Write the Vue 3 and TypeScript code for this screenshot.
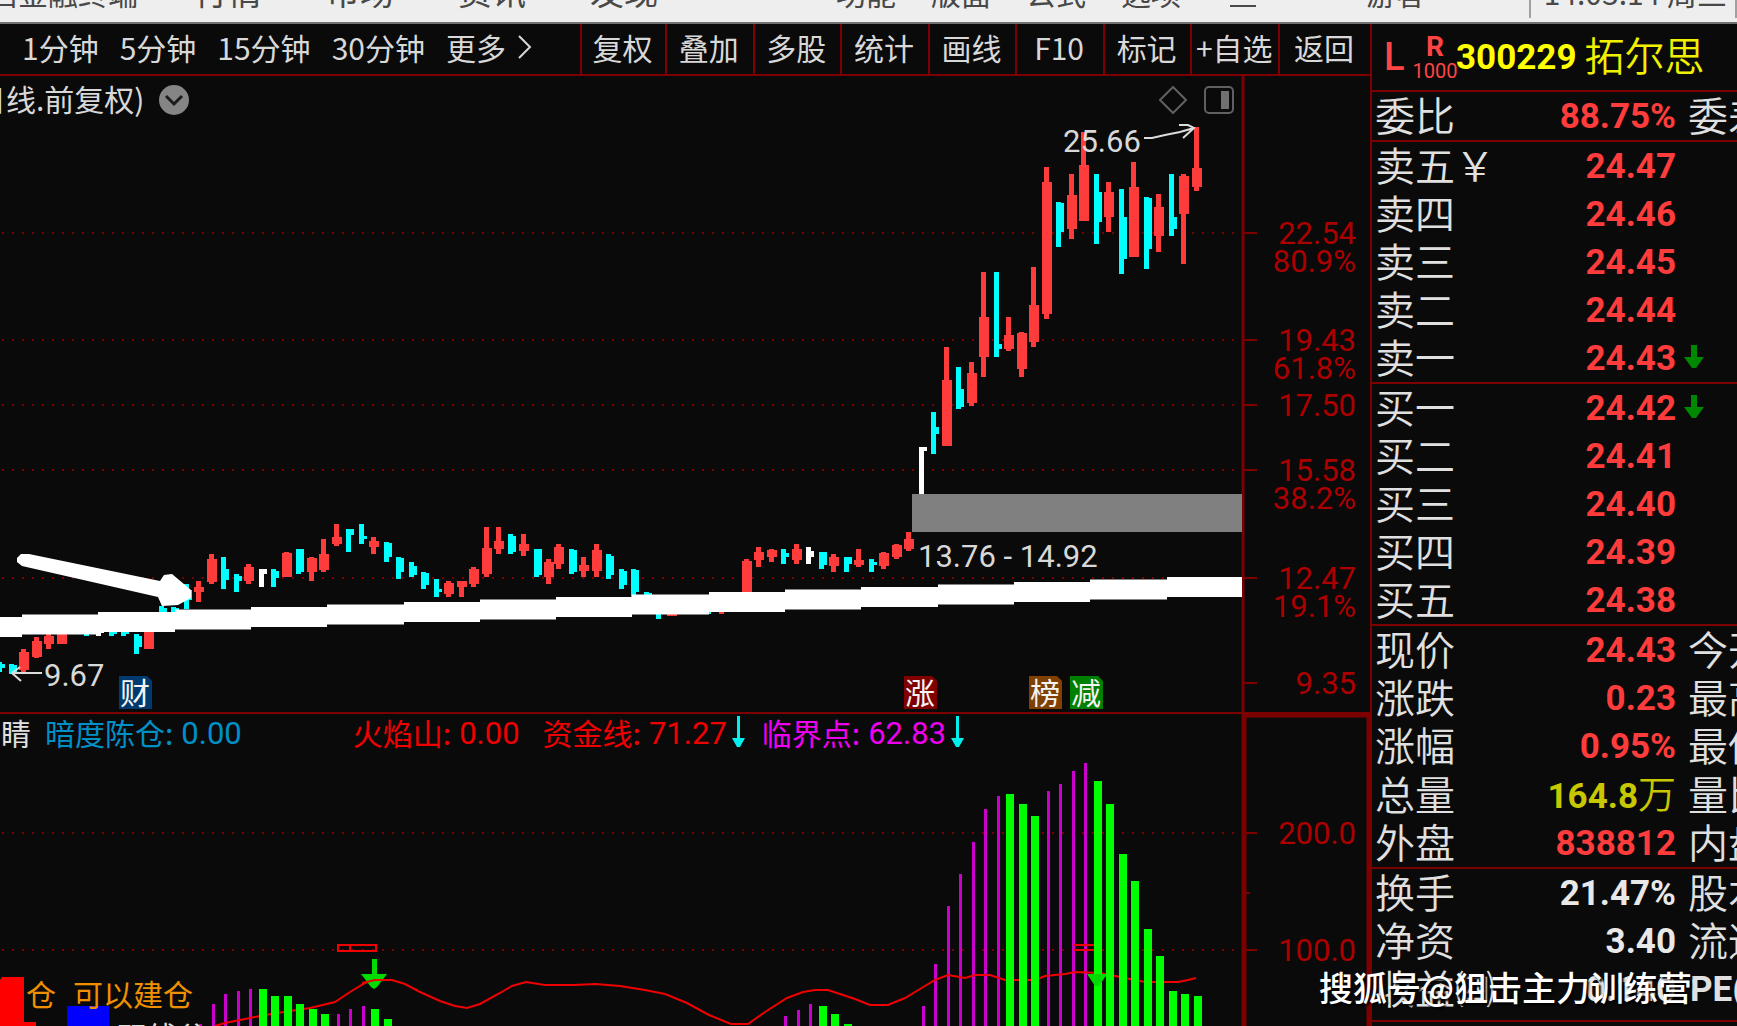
<script setup lang="ts">
type Kind = 'up' | 'down' | 'flat'
type Candle = [x: number, kind: Kind, high: number, low: number, top: number, bottom: number]
type Tone = 'red' | 'yellow' | 'white'

interface QuoteRow {
  label: string
  value: string
  unit?: string
  tone: Tone
  next?: string
  falling?: boolean
}

const leftMenus = ['行情', '市场', '资讯', '发现']
const rightMenus = ['功能', '版面', '公式', '选项']
const periods = ['1分钟', '5分钟', '15分钟', '30分钟']
const tools = ['复权', '叠加', '多股', '统计', '画线', 'F10', '标记', '+自选', '返回']

const candles: Candle[] = [
  [0, 'down', 662, 672, 664, 668], [12, 'down', 664, 674, 665, 673],
  [24, 'up', 649, 672, 652, 670], [37, 'up', 637, 658, 641, 657],
  [49, 'up', 630, 649, 636, 644], [62, 'up', 630, 644, 630, 644],
  [87, 'down', 626, 636, 626, 634], [99, 'flat', 626, 636, 626, 633],
  [112, 'down', 626, 636, 626, 634], [124, 'down', 626, 636, 626, 634],
  [137, 'down', 634, 654, 636, 647], [149, 'up', 625, 649, 625, 649],
  [162, 'down', 606, 614, 608, 612], [174, 'down', 607, 614, 608, 612],
  [187, 'down', 584, 609, 590, 600], [199, 'up', 581, 602, 587, 592],
  [212, 'up', 554, 584, 559, 582], [224, 'down', 557, 589, 569, 580],
  [237, 'down', 574, 592, 576, 581], [249, 'up', 564, 584, 567, 581],
  [262, 'flat', 569, 587, 569, 574], [274, 'down', 569, 587, 571, 578],
  [287, 'up', 552, 577, 553, 577], [299, 'down', 549, 574, 549, 572],
  [312, 'up', 557, 581, 558, 572], [324, 'up', 539, 572, 554, 570],
  [337, 'up', 524, 546, 537, 544], [349, 'down', 529, 552, 529, 535],
  [362, 'down', 524, 544, 536, 539], [374, 'up', 537, 554, 541, 547],
  [387, 'down', 542, 562, 543, 557], [399, 'down', 557, 579, 558, 572],
  [412, 'down', 562, 577, 566, 575], [424, 'down', 572, 589, 573, 585],
  [437, 'down', 579, 597, 589, 592], [449, 'up', 581, 597, 583, 594],
  [462, 'up', 581, 597, 581, 587], [474, 'up', 567, 587, 569, 584],
  [487, 'up', 527, 577, 548, 574], [499, 'up', 527, 554, 541, 549],
  [511, 'down', 534, 554, 536, 552], [524, 'up', 534, 556, 544, 551],
  [537, 'down', 549, 577, 549, 575], [549, 'up', 559, 584, 562, 577],
  [559, 'up', 544, 569, 547, 564], [572, 'down', 549, 574, 550, 572],
  [584, 'up', 557, 577, 565, 571], [597, 'up', 544, 577, 550, 571],
  [609, 'down', 554, 579, 556, 575], [622, 'down', 569, 589, 571, 585],
  [634, 'down', 569, 597, 570, 592], [647, 'down', 592, 602, 593, 600],
  [659, 'down', 604, 619, 606, 612], [672, 'up', 606, 616, 606, 616],
  [709, 'down', 606, 614, 606, 610], [722, 'up', 604, 614, 604, 610],
  [747, 'up', 559, 600, 561, 600], [759, 'up', 547, 567, 552, 560],
  [772, 'up', 549, 562, 550, 557], [784, 'down', 549, 564, 553, 557],
  [797, 'up', 544, 564, 549, 560], [809, 'flat', 547, 564, 551, 557],
  [822, 'down', 552, 569, 552, 565], [834, 'up', 554, 572, 557, 566],
  [847, 'down', 557, 572, 557, 564], [859, 'up', 549, 567, 560, 565],
  [872, 'down', 559, 572, 562, 565], [884, 'up', 552, 569, 553, 566],
  [897, 'up', 544, 559, 545, 557], [909, 'up', 532, 551, 539, 549],
  [922, 'flat', 447, 494, 447, 451], [934, 'down', 412, 454, 427, 434],
  [947, 'up', 347, 446, 380, 446], [959, 'down', 367, 409, 389, 407],
  [972, 'up', 362, 406, 373, 403], [984, 'up', 272, 377, 317, 357],
  [997, 'down', 272, 357, 344, 349], [1009, 'up', 317, 351, 335, 349],
  [1022, 'up', 332, 377, 333, 369], [1034, 'up', 267, 347, 305, 342],
  [1047, 'up', 167, 319, 182, 314], [1059, 'down', 202, 247, 203, 232],
  [1072, 'up', 174, 239, 195, 229], [1084, 'up', 132, 221, 165, 221],
  [1097, 'down', 174, 244, 192, 222], [1109, 'up', 182, 232, 192, 217],
  [1122, 'down', 189, 274, 217, 259], [1134, 'up', 162, 257, 187, 257],
  [1147, 'down', 197, 269, 198, 249], [1159, 'up', 194, 252, 207, 236],
  [1172, 'down', 174, 236, 217, 229], [1184, 'up', 174, 264, 176, 214],
  [1197, 'up', 127, 191, 168, 187],
]

const priceGrid = [233, 340, 405, 470, 578]
const priceTicks = [...priceGrid, 683]
const priceLabels: [string, number][] = [
  ['22.54', 244], ['80.9%', 272], ['19.43', 351], ['61.8%', 379], ['17.50', 416],
  ['15.58', 481], ['38.2%', 509], ['12.47', 589], ['19.1%', 617], ['9.35', 694],
]

// Moving band: rises in sixteen equal steps across the pane.
const band = (() => {
  const xs = Array.from({ length: 16 }, (_, i) => Math.round(22 + 76.3 * i))
  let top = 'M0 617'
  xs.forEach((x, i) => { top += `H${x}V${617 - 2.5 * (i + 1)}` })
  let back = 'H1242V597'
  for (let i = 15; i >= 0; i--) back += `H${xs[i]}V${637 - 2.5 * i}`
  return `${top}${back}H0Z`
})()

const purple: [number, number][] = [
  [200, 1024], [213, 1004], [225, 994], [238, 991], [250, 989], [338, 1014], [350, 1009],
  [363, 1006], [785, 1016], [798, 1010], [810, 1004], [923, 1006], [935, 964], [948, 906],
  [960, 874], [973, 842], [985, 809], [998, 796], [1048, 791], [1060, 784], [1073, 771], [1085, 763],
]
const green: [number, number][] = [
  [263, 989], [275, 996], [288, 996], [300, 1004], [313, 1009], [325, 1014], [375, 1009],
  [388, 1019], [823, 1006], [835, 1014], [848, 1024], [1010, 794], [1023, 804], [1035, 816],
  [1098, 781], [1110, 804], [1123, 854], [1135, 881], [1148, 929], [1160, 956], [1173, 991],
  [1185, 994], [1198, 996],
]
const fundLine =
  '215,1026 225,1023 250,1018 265,1015 290,1011 310,1008 335,1002 350,992 365,983 375,980 392,980 405,984 420,992 440,1001 455,1006 467,1008 480,1004 500,993 512,986 526,982 545,985 573,985 596,984 620,986 645,990 665,994 687,1003 709,1015 731,1024 748,1024 765,1012 787,998 803,992 815,990 828,990 840,994 855,999 870,1005 888,1005 905,998 920,989 935,980 948,975 965,978 975,975 990,975 1005,980 1035,980 1045,976 1065,974 1075,972 1100,973 1115,976 1130,979 1145,982 1178,982 1188,980 1196,978'

const badges = [
  { text: '财', x: 119, fill: '#003a6e' },
  { text: '涨', x: 904, fill: '#800000' },
  { text: '榜', x: 1029, fill: '#804000' },
  { text: '减', x: 1070, fill: '#008000' },
]

const sections: QuoteRow[][] = [
  [{ label: '委比', value: '88.75%', tone: 'red', next: '委差' }],
  [
    { label: '卖五￥', value: '24.47', tone: 'red' },
    { label: '卖四', value: '24.46', tone: 'red' },
    { label: '卖三', value: '24.45', tone: 'red' },
    { label: '卖二', value: '24.44', tone: 'red' },
    { label: '卖一', value: '24.43', tone: 'red', falling: true },
  ],
  [
    { label: '买一', value: '24.42', tone: 'red', falling: true },
    { label: '买二', value: '24.41', tone: 'red' },
    { label: '买三', value: '24.40', tone: 'red' },
    { label: '买四', value: '24.39', tone: 'red' },
    { label: '买五', value: '24.38', tone: 'red' },
  ],
  [
    { label: '现价', value: '24.43', tone: 'red', next: '今开' },
    { label: '涨跌', value: '0.23', tone: 'red', next: '最高' },
    { label: '涨幅', value: '0.95%', tone: 'red', next: '最低' },
    { label: '总量', value: '164.8', unit: '万', tone: 'yellow', next: '量比' },
    { label: '外盘', value: '838812', tone: 'red', next: '内盘' },
  ],
  [
    { label: '换手', value: '21.47%', tone: 'white', next: '股本' },
    { label: '净资', value: '3.40', tone: 'white', next: '流通' },
    { label: '收益㈣', value: '0.140', tone: 'white', next: 'PE(动)' },
  ],
]

function bodyWidth(kind: Kind): number {
  return kind === 'up' ? 10 : 8
}
function bodyLeft(x: number, kind: Kind): number {
  return kind === 'up' ? x - 5 : x - 3
}
</script>

<template>
  <div class="terminal">
    <header class="menubar">
      <span class="brand">启金融终端</span>
      <nav class="menus large">
        <a v-for="m in leftMenus" :key="m" href="#">{{ m }}</a>
      </nav>
      <nav class="menus small">
        <a v-for="m in rightMenus" :key="m" href="#">{{ m }}</a>
      </nav>
      <span class="minimise"></span>
      <a class="guest" href="#">游客</a>
      <time class="clock">14:03:14 周三</time>
    </header>

    <div class="workspace">
      <main class="charts">
        <div class="toolbar">
          <div class="periods">
            <button v-for="p in periods" :key="p" type="button">{{ p }}</button>
            <button type="button" class="more">
              更多
              <svg width="14" height="26" viewBox="0 0 14 26"><path d="M1 2L12 13L1 24" fill="none" stroke="#d8d8d8" stroke-width="2" /></svg>
            </button>
          </div>
          <div class="tools">
            <button v-for="t in tools" :key="t" type="button">{{ t }}</button>
          </div>
        </div>

        <section class="pane">
          <svg class="plot" viewBox="0 76 1370 636">
            <g class="grid">
              <line v-for="y in priceGrid" :key="y" x1="2" x2="1236" :y1="y" :y2="y" />
            </g>
            <g class="axis">
              <path d="M1243 76V712" stroke-width="3" />
              <path v-for="y in priceTicks" :key="y" :d="`M1244 ${y}h13`" stroke-width="2" />
            </g>
            <g class="axis-text">
              <text v-for="[t, y] in priceLabels" :key="t" x="1356" :y="y">{{ t }}</text>
            </g>
            <g v-for="[x, kind, high, low, top, bottom] in candles" :key="x" :class="kind">
              <rect :x="x - 3" :y="high" width="5" :height="low - high" />
              <rect :x="bodyLeft(x, kind)" :y="top" :width="bodyWidth(kind)" :height="bottom - top" />
            </g>
            <rect x="912" y="494" width="330" height="38" fill="#808080" />
            <path :d="band" fill="#fff" />
            <path d="M17 558L21 554H29L160 581L164 575L172 574L191 590V598L178 605L162 606L158 597L22 566L17 562Z" fill="#fff" />
            <g class="note">
              <text x="1063" y="152">25.66</text>
              <text x="918" y="567">13.76 - 14.92</text>
              <text x="44" y="686">9.67</text>
            </g>
            <g fill="none" stroke="#dcdcdc" stroke-width="2">
              <path d="M1144 138H1152L1165 135L1180 132L1194 128M1179 125H1188L1194 128L1183 138" />
              <path d="M42 673H12M20 667L12 673L21 681" />
            </g>
            <g v-for="b in badges" :key="b.text">
              <path :d="`M${b.x} 676h28l5 5v28h-33z`" :fill="b.fill" />
              <text class="badge" :x="b.x + 16" y="704">{{ b.text }}</text>
            </g>
          </svg>
          <div class="pane-head">
            <span class="title">日线.前复权)</span>
            <button type="button" class="round" aria-label="展开">
              <svg width="30" height="30" viewBox="0 0 30 30"><circle cx="15" cy="15" r="15" fill="#858585" /><path d="M7 11L15 19L23 11" fill="none" stroke="#1c1c1c" stroke-width="3" /></svg>
            </button>
            <svg class="diamond" width="28" height="28" viewBox="0 0 28 28"><path d="M14 1L27 14L14 27L1 14Z" fill="none" stroke="#606060" stroke-width="2" /></svg>
            <svg width="32" height="28" viewBox="0 0 32 28"><rect x="2" y="1" width="28" height="26" rx="4" fill="none" stroke="#606060" stroke-width="2" /><rect x="18" y="5" width="8" height="18" fill="#707070" /></svg>
          </div>
        </section>

        <section class="pane lower">
          <svg class="plot" viewBox="0 714 1370 312">
            <g class="grid">
              <line x1="2" x2="1236" y1="833" y2="833" />
              <line x1="2" x2="1236" y1="950" y2="950" />
            </g>
            <g class="axis">
              <path d="M1244 1030V715H1369V1030" stroke-width="5" />
              <path d="M1246 833h11M1246 893h4M1246 950h11" stroke-width="2" />
            </g>
            <g class="axis-text">
              <text x="1356" y="844">200.0</text>
              <text x="1356" y="961">100.0</text>
            </g>
            <rect v-for="[x, y] in purple" :key="x" :x="x - 1" :y="y" width="3" height="270" fill="#cc00cc" />
            <g fill="none" stroke="#f00000" stroke-width="2">
              <rect x="338" y="945" width="38" height="6" />
              <path d="M350 945v6M1073 945h22M1073 950h22" />
              <polyline :points="fundLine" />
            </g>
            <rect v-for="[x, y] in green" :key="x" :x="x - 4" :y="y" width="8" height="270" fill="#00ff00" />
            <path d="M372 959h5v15h10l-10 13l-3 2l-3-2l-10-13h11zM1087 974h20l-8 12h-4z" fill="#00dc00" />
            <path d="M362 983L375 980H392" fill="none" stroke="#f00000" stroke-width="2" />
            <path d="M2 977H24V1022H36V1030H0V980Z" fill="#ff0000" />
            <path d="M67 1006h42v24h-42z" fill="#0000ff" />
            <g class="signal">
              <text x="26" y="1006">仓</text>
              <text x="73" y="1006">可以建仓</text>
            </g>
            <text class="hint" x="117" y="1048">双线谷</text>
          </svg>
          <div class="legend">
            <span class="name">点睛</span>
            <span class="item blue">暗度陈仓:<b>0.00</b></span>
            <span class="item fire">火焰山:<b>0.00</b></span>
            <span class="item fund">资金线:<b>71.27</b>
              <svg width="14" height="32" viewBox="0 0 14 32"><path d="M6 0h3v22h5l-5 9h-3l-5-9h5z" fill="#00f0f0" /></svg>
            </span>
            <span class="item pink">临界点:<b>62.83</b>
              <svg width="14" height="32" viewBox="0 0 14 32"><path d="M6 0h3v22h5l-5 9h-3l-5-9h5z" fill="#00f0f0" /></svg>
            </span>
          </div>
        </section>
      </main>

      <aside class="quote">
        <h1>
          <span class="flag">L</span>
          <span class="margin"><b>R</b><i>1000</i></span>
          <span class="code">300229</span>
          <span class="stock">拓尔思</span>
        </h1>
        <table v-for="(rows, i) in sections" :key="i">
          <tbody>
            <tr v-for="r in rows" :key="r.label">
              <th scope="row">{{ r.label }}</th>
              <td class="value" :class="r.tone">{{ r.value }}<span v-if="r.unit" class="unit">{{ r.unit }}</span></td>
              <td class="next" :class="{ latin: r.next?.startsWith('PE') }">
                <svg v-if="r.falling" width="20" height="24" viewBox="0 0 20 24"><path d="M7 0h6v12h7l-8 11h-4l-8-11h7z" fill="#008800" /></svg>
                {{ r.next }}
              </td>
            </tr>
          </tbody>
        </table>
        <p class="tail">净利润 &nbsp; 利润率 收入</p>
      </aside>
    </div>
    <div class="watermark">搜狐号@狙击主力训练营</div>
  </div>
</template>

<style>
body {
  margin: 0;
  background: #0a0a0a;
}
</style>

<style scoped>
.terminal {
  position: relative;
  display: flex;
  flex-direction: column;
  height: 100vh;
  overflow: hidden;
  background: #0a0a0a;
  color: #e0e0e0;
  font-family: "Noto Sans CJK SC", sans-serif;
  font-size: 30px;
}
button {
  padding: 0;
  border: 0;
  background: none;
  color: inherit;
  font: inherit;
  line-height: 44px;
  white-space: nowrap;
}
.menubar {
  display: flex;
  align-items: flex-end;
  flex: none;
  box-sizing: border-box;
  height: 24px;
  padding-bottom: 12px;
  overflow: hidden;
  border-bottom: 2px solid #707070;
  background: #eeeeee;
  color: #484848;
  line-height: 36px;
  white-space: nowrap;
}
.menubar a {
  color: inherit;
  text-decoration: none;
}
.brand {
  width: 206px;
  margin-left: -12px;
}
.menus {
  display: flex;
}
.menus.large {
  gap: 64px;
  padding-bottom: 1px;
  font-size: 34px;
}
.menus.small {
  gap: 35px;
  margin-left: 178px;
}
.minimise {
  width: 26px;
  height: 12px;
  margin: 0 110px 3px 49px;
  box-sizing: border-box;
  border-bottom: 2px solid #484848;
}
.clock {
  box-sizing: border-box;
  margin: 0 0 -8px auto;
  padding: 0 8px 8px 13px;
  border-left: 2px solid #a0a0a0;
  border-right: 2px solid #a0a0a0;
}
.workspace {
  display: flex;
  flex: 1;
  min-height: 0;
}
.charts {
  flex: 1;
  min-width: 0;
}
.toolbar {
  display: flex;
  height: 50px;
  border-bottom: 2px solid #7c0000;
  color: #d8d8d8;
}
.toolbar button {
  padding-bottom: 4px;
}
.periods {
  display: flex;
  flex: 1;
  gap: 21px;
  padding-left: 22px;
}
.more {
  display: flex;
  align-items: center;
  gap: 12px;
}
.tools {
  display: grid;
  grid-template-columns: 85px repeat(7, 1fr) 92px;
  width: 790px;
}
.tools button {
  padding-right: 2px;
  border-left: 2px solid #7c0000;
}
.pane {
  display: grid;
  border-bottom: 2px solid #7c0000;
}
.pane > * {
  grid-area: 1 / 1;
}
.lower {
  border: 0;
}
.plot {
  display: block;
  width: 100%;
}
.pane-head {
  display: flex;
  align-items: center;
  align-self: start;
  height: 48px;
  padding-right: 135px;
}
.title {
  margin-left: -24px;
  margin-right: 15px;
  padding-bottom: 4px;
  color: #d8d8d8;
}
.round {
  display: flex;
}
.diamond {
  margin: 0 16px 0 auto;
}
.grid line {
  stroke: #780000;
  stroke-width: 2;
  stroke-dasharray: 2 8;
}
.axis path {
  fill: none;
  stroke: #7c0000;
}
.axis-text text {
  fill: #ac0000;
  font: 31px Roboto, sans-serif;
  text-anchor: end;
}
.note text {
  fill: #d8d8d8;
  font: 31px Roboto, sans-serif;
}
.up {
  fill: #ff3c3c;
}
.down {
  fill: #00ffff;
}
.flat {
  fill: #ffffff;
}
.badge {
  fill: #f4f4f4;
  font-size: 30px;
  text-anchor: middle;
}
.signal {
  fill: #f09000;
}
.hint {
  fill: #e0e0e0;
}
.legend {
  display: flex;
  align-items: center;
  align-self: start;
  height: 36px;
  margin-left: -29px;
  white-space: nowrap;
}
.item {
  display: flex;
  align-items: center;
  margin-left: 20px;
}
.item b {
  margin-left: 8px;
  padding-top: 2px;
  font: 31px Roboto, sans-serif;
}
.item svg {
  margin-left: 4px;
}
.name {
  margin-right: -6px;
}
.blue {
  margin-right: 91px;
  color: #0090c8;
}
.fire {
  margin-right: 3px;
  color: #f00000;
}
.fund {
  margin-right: -3px;
  color: #f00000;
}
.pink {
  color: #f000f0;
}
.quote {
  width: 365px;
  overflow: hidden;
  border-left: 2px solid #7c0000;
}
.quote h1 {
  display: flex;
  align-items: center;
  height: 66px;
  margin: 0;
  padding-left: 12px;
  font-weight: 400;
  white-space: nowrap;
}
.flag {
  width: 30px;
  color: #ff4444;
  font: 38px Roboto, sans-serif;
  font-weight: 500;
}
.margin {
  display: flex;
  flex-direction: column;
  align-items: center;
  width: 42px;
  padding-top: 4px;
  color: #ff4444;
  font: 20px "Liberation Sans Narrow", Roboto, sans-serif;
  line-height: 24px;
}
.margin b {
  font: bold 28px Roboto, sans-serif;
  line-height: 24px;
}
.margin i {
  font-style: normal;
}
.code {
  margin-right: 8px;
  color: #ffff00;
  font: bold 35px Roboto, sans-serif;
}
.stock {
  padding-bottom: 6px;
  color: #f0f000;
  font-size: 40px;
  font-weight: 350;
}
table {
  width: 100%;
  border-top: 2px solid #7c0000;
  border-spacing: 0;
  table-layout: fixed;
}
th,
td {
  height: 48px;
  padding: 0;
  box-sizing: border-box;
  overflow: hidden;
  line-height: 44px;
  white-space: nowrap;
}
th {
  width: 126px;
  padding: 0 0 4px 3px;
  font-size: 40px;
  font-weight: 350;
  text-align: left;
}
.value {
  width: 178px;
  padding-top: 2px;
  font: bold 35px Roboto, sans-serif;
  line-height: 44px;
  text-align: right;
}
.unit {
  font: 38px "Noto Sans CJK SC", sans-serif;
  font-weight: 350;
  line-height: 40px;
}
.next {
  padding: 0 0 4px 12px;
  font-size: 40px;
  font-weight: 350;
}
.next svg {
  margin-left: -4px;
  vertical-align: 4px;
}
.latin {
  padding: 2px 0 0 14px;
  font: bold 35px Roboto, "Noto Sans CJK SC", sans-serif;
  line-height: 42px;
}
.red {
  color: #ff3c3c;
}
.yellow {
  color: #c8c800;
}
.white {
  color: #e8e8e8;
}
.tail {
  margin: 7px 0 0;
  padding-left: 4px;
  border-top: 2px solid #7c0000;
  font-size: 40px;
  font-weight: 350;
  line-height: 42px;
  white-space: nowrap;
}
.watermark {
  position: absolute;
  right: 45px;
  bottom: 15px;
  color: #fff;
  font-size: 34px;
  font-weight: 500;
  line-height: 48px;
  text-shadow: 2px 2px 2px #000;
}
</style>
